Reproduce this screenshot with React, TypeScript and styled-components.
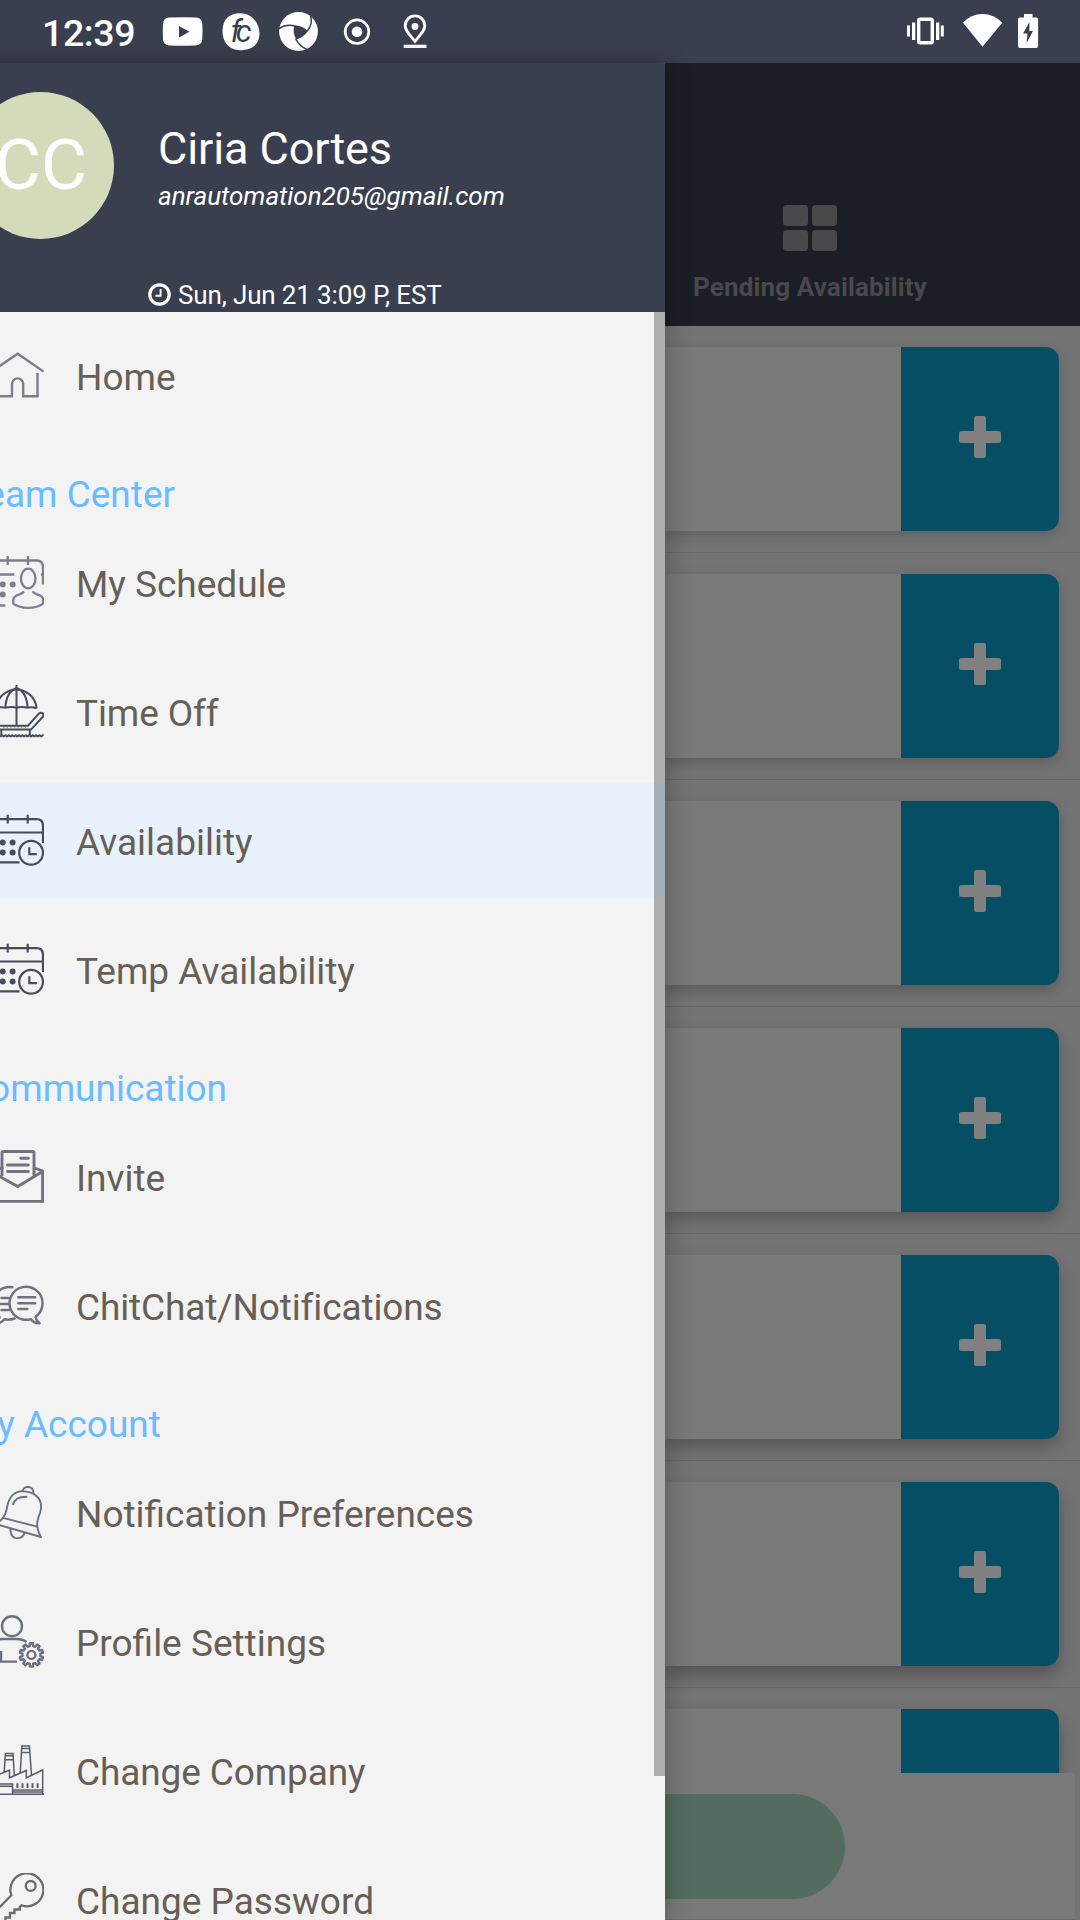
import React from "react";
import styled, { createGlobalStyle } from "styled-components";

const GlobalStyle = createGlobalStyle`
  * { box-sizing: border-box; }
  html, body { margin: 0; padding: 0; }
  body { width: 1080px; height: 1920px; overflow: hidden; background: #3a3f4f; font-family: Roboto, "Noto Sans", sans-serif; }
`;

const Screen = styled.div`
  width: 1080px;
  height: 1920px;
  overflow: hidden;
  display: flex;
  flex-direction: column;
`;

const StatusBar = styled.header`
  height: 63px;
  flex: none;
  display: flex;
  align-items: center;
  justify-content: space-between;
  background: #3a3f4f;
  color: #fff;
  padding: 0 40px 0 42px;
`;

const StatusGroup = styled.div<{ $gap: number }>`
  display: flex;
  align-items: center;
  gap: ${(p) => p.$gap}px;
`;

const Clock = styled.span`
  width: 102px;
  font-size: 37.5px;
  line-height: 44px;
  font-weight: 500;
  letter-spacing: -0.4px;
  padding-top: 2px;
  white-space: nowrap;
`;

const Body = styled.div`
  flex: 1;
  min-height: 0;
  display: flex;
`;

const Drawer = styled.aside`
  position: relative;
  z-index: 2;
  flex: none;
  width: 720px;
  margin-left: -55px;
  display: flex;
  flex-direction: column;
  background: #f3f3f3;
  box-shadow: 0 0 24px rgba(0, 0, 0, 0.3);
`;

const Profile = styled.div`
  height: 249px;
  flex: none;
  display: flex;
  flex-direction: column;
  background: #3a3f4f;
  color: #fff;
`;

const ProfileTop = styled.div`
  display: flex;
  height: 217px;
  padding: 29px 0 0 22px;
`;

const Avatar = styled.div`
  width: 147px;
  height: 147px;
  border-radius: 50%;
  flex: none;
  display: flex;
  align-items: center;
  justify-content: center;
  padding: 0 0 2px 1px;
  background: #d4dbba;
  font-size: 71px;
  line-height: 80px;
`;

const Person = styled.div`
  padding: 30px 0 0 44px;
`;

const PersonName = styled.div`
  font-size: 45px;
  line-height: 54px;
  letter-spacing: -0.1px;
  white-space: nowrap;
`;

const Email = styled.div`
  font-size: 26px;
  line-height: 36px;
  margin-top: 2px;
  font-style: italic;
  letter-spacing: -0.05px;
`;

const TimeRow = styled.div`
  display: flex;
  align-items: center;
  gap: 7px;
  padding-left: 203px;
  height: 30px;
  font-size: 26px;
  line-height: 30px;
  letter-spacing: -0.15px;
  white-space: nowrap;
`;

const MenuScroll = styled.nav`
  position: relative;
  flex: 1;
  min-height: 0;
  overflow: hidden;
  padding-top: 6px;
`;

const ScrollThumb = styled.div`
  position: absolute;
  top: 0;
  right: 0;
  width: 11px;
  height: 1464px;
  background: rgba(0, 0, 0, 0.28);
`;

const Item = styled.div<{ $active?: boolean }>`
  height: 116px;
  margin-bottom: 13px;
  padding-left: 46px;
  display: flex;
  align-items: center;
  gap: 32px;
  background: ${(p) => (p.$active ? "#e7f2fd" : "transparent")};
`;

const ItemLabel = styled.span<{ $tight: boolean }>`
  font-size: 37px;
  line-height: 44px;
  padding-top: 4px;
  color: #675f56;
  letter-spacing: ${(p) => (p.$tight ? "-0.12px" : "0")};
  white-space: nowrap;
`;

const ItemIcon = styled.svg<{ $color: string; $stroke: number }>`
  width: 53px;
  height: 53px;
  flex: none;
  margin-bottom: 2px;
  fill: none;
  stroke: ${(p) => p.$color};
  color: ${(p) => p.$color};
  stroke-width: ${(p) => p.$stroke};
`;

const SectionTitle = styled.h2`
  margin: 0;
  height: 78px;
  padding: 26px 0 0 20px;
  font-size: 37px;
  line-height: 44px;
  font-weight: 400;
  color: #6abbff;
  white-space: nowrap;
`;

const Content = styled.main`
  flex: 1;
  min-width: 0;
  display: flex;
  flex-direction: column;
  background: #737373;
`;

const TabBar = styled.div`
  height: 263px;
  flex: none;
  display: flex;
  flex-direction: column;
  align-items: center;
  padding: 142px 125px 0 0;
  background: #1c1e26;
  color: #49494c;
`;

const TabGrid = styled.div`
  display: grid;
  grid-template-columns: 25px 25px;
  grid-template-rows: 21px 21px;
  gap: 4px;
`;

const Tile = styled.i`
  border-radius: 4px;
  background: #49494c;
`;

const TabLabel = styled.div`
  margin-top: 21px;
  font-size: 26px;
  line-height: 30px;
  font-weight: 700;
  letter-spacing: 0.13px;
  white-space: nowrap;
`;

const List = styled.div`
  height: 1447px;
  flex: none;
  overflow: hidden;
`;

const Row = styled.div`
  height: 227px;
  padding: 21px 21px 21px 0;
  border-bottom: 1px solid #676767;
`;

const Card = styled.div<{ $depth: number }>`
  height: 184px;
  display: flex;
  justify-content: flex-end;
  overflow: hidden;
  background: #797979;
  border-radius: 0 13px 13px 0;
  box-shadow: 0 ${(p) => 4 + p.$depth}px ${(p) => 12 + p.$depth}px rgba(0, 0, 0, ${(p) => 0.17 + p.$depth * 0.02});
`;

const AddButton = styled.div`
  width: 158px;
  padding: 0 1px 4px 0;
  display: flex;
  align-items: center;
  justify-content: center;
  background: #064e64;
`;

const Footer = styled.div`
  flex: 1;
  margin-right: 5px;
  padding-top: 21px;
  background: #797979;
  border-bottom: 1px solid #6c6c6c;
`;

const Submit = styled.div`
  width: 180px;
  height: 105px;
  border-radius: 0 53px 53px 0;
  background: #536c5f;
`;

const gearPath = (cx: number, cy: number, outer: number, inner: number, teeth: number) => {
  const step = (Math.PI * 2) / teeth;
  const points: string[] = [];
  for (let i = 0; i < teeth; i++) {
    const a = i * step - Math.PI / 2;
    [
      [-0.3, inner],
      [-0.2, outer],
      [0.2, outer],
      [0.3, inner],
    ].forEach(([o, r]) => {
      points.push(`${(cx + r * Math.cos(a + o * step)).toFixed(2)} ${(cy + r * Math.sin(a + o * step)).toFixed(2)}`);
    });
  }
  return `M${points.join("L")}Z`;
};

const CalendarClock = (
  <>
    <path d="M-9 5.2H36.5Q43 5.2 43 12V29M-9 18.5H43M-9 48.4H19.5M7.7 .8V9.5M27.7 .8V9.5" />
    <circle cx="31.1" cy="38.8" r="11.9" />
    <path d="M29.3 33.2V40.2H36.8" />
    <g fill="currentColor" stroke="none">
      <circle cx="2.7" cy="28.5" r="3" />
      <circle cx="12.6" cy="28.5" r="3" />
      <circle cx="2.7" cy="38.4" r="3" />
      <circle cx="12.6" cy="38.4" r="3" />
    </g>
  </>
);

type Icon = { color: string; stroke: number; art: React.ReactNode };

const icons: Record<string, Icon> = {
  home: {
    color: "#7b7f8b",
    stroke: 2.4,
    art: (
      <path d="M-8.5 22.6L17.7 4.8L43.6 22.6M37.5 24V47.2H23.2V35a5.6 5.6 0 0 0-11.2 0V47.2H-1.5V24" />
    ),
  },
  schedule: {
    color: "#7b7f8b",
    stroke: 2.3,
    art: (
      <>
        <path d="M-9 4.5H36Q43 4.5 43 11V28.5M7.7 0V9M28 0V9M-9 18.5H14.3M-9 49.5H5.3M41 18.5h2" />
        <ellipse cx="28.2" cy="22.5" rx="7.3" ry="9.8" />
        <path d="M24 35.3Q23 37 19.5 38.3Q13.3 40 13.3 44V47.6Q19 51.8 28.2 51.8Q37.5 51.8 43 47.6V43.5Q43 40 37.5 38.6Q34 37.3 32.6 35.3" />
        <g fill="currentColor" stroke="none">
          <circle cx="2.7" cy="28.5" r="3" />
          <circle cx="12.7" cy="28.5" r="3" />
          <circle cx="2.7" cy="38.6" r="3" />
        </g>
      </>
    ),
  },
  timeOff: {
    color: "#464c5e",
    stroke: 2,
    art: (
      <>
        <path d="M16.5 0V40.5M-3.8 23.3A20.3 21 0 0 1 36.6 23.3M16.5 3Q6 7 5.3 23.3M16.5 3Q27 7 27.6 23.3" />
        <path d="M-3.8 23.2Q1 21.5 5.3 22.6Q11 21.6 16.5 22.4Q22 21.6 27.6 22.6Q32 21.5 36.6 23.2" />
        <path d="M-9 40.7H28L38.8 28.7Q41 27 43 28.6Q44 30.5 42.6 32L31 44.6H-9M1.3 44V50M29.8 44V50" />
        <path d="M-9 50.8q.85-1 1.7 0t1.7 0t1.7 0t1.7 0t1.7 0t1.7 0t1.7 0t1.7 0t1.7 0t1.7 0t1.7 0t1.7 0t1.7 0t1.7 0t1.7 0t1.7 0t1.7 0t1.7 0t1.7 0t1.7 0t1.7 0t1.7 0t1.7 0t1.7 0t1.7 0t1.7 0t1.7 0t1.7 0t1.7 0t1.7 0t1.7 0" />
        <path d="M3 42H28" strokeDasharray="1.4 2.2" strokeWidth="1.2" />
      </>
    ),
  },
  availability: { color: "#464c5e", stroke: 2.2, art: CalendarClock },
  invite: {
    color: "#70737f",
    stroke: 2.9,
    art: (
      <>
        <path d="M2 26V3Q2 1.5 3.7 1.5H32.3Q34 1.5 34 3V26M-9 21.5L17.7 36.6L42.6 21.6M34.5 18L42.6 21V51.4H-9" />
        <path d="M20.7 8.2H28.3M7.5 15H28.3M7.5 21.5H28.3M-9 21L2 18" strokeLinecap="round" />
      </>
    ),
  },
  chat: {
    color: "#70737f",
    stroke: 2.5,
    art: (
      <g strokeLinecap="round" strokeLinejoin="round">
        <path d="M35.8 37.6Q35.5 40.5 39.5 44.2Q34.5 44.6 31 40.2Q27 41.3 22.5 40.4A16.5 16.5 0 1 1 35.8 37.6Z" />
        <path d="M18.3 18.2H35.2M18.3 24.2H35.2M18.3 30H27.2" />
        <path d="M12.3 8.3A16.5 16.5 0 0 0 -.5 37.8Q-1 41-4 44.2Q1 44.6 4.5 40.3Q9.5 41.3 14.5 39.5M1.5 19H8.8M.5 25H7.8M1.5 31H8.8" />
      </g>
    ),
  },
  bell: {
    color: "#6b7080",
    stroke: 1.9,
    art: (
      <g strokeLinejoin="round">
        <path d="M3 31.8Q6 28 7.3 20Q10.5 5.2 23 5.1Q33 6 37.5 11Q41.5 15 41 22.5Q40.5 27 38.5 31Q36.5 37 37.4 41.5Q38.3 47 41 51L-6 37.5Q1 35.5 3 31.8L37.2 40.6" />
        <path d="M22.2 5.2Q24 .9 28 .9Q33.6 1.3 33.6 8M13 19Q14.5 10.5 27.3 10.8M10.4 43Q10.6 50.5 15 51.8Q22 53.5 24.6 46.8" />
      </g>
    ),
  },
  profile: {
    color: "#697080",
    stroke: 2.4,
    art: (
      <>
        <circle cx="12" cy="11.2" r="10" />
        <path d="M-9 34Q-7 24 3 24H16Q22.5 24 26.5 27M1 36V46.6H17" />
        <path d={gearPath(31.4, 39.9, 11.8, 9, 10)} strokeLinejoin="round" />
        <circle cx="31.4" cy="39.9" r="4" />
      </>
    ),
  },
  factory: {
    color: "#575d6d",
    stroke: 1.5,
    art: (
      <>
        <path d="M-9 33.5L9.5 26.2V33.8L26.3 26.5V33.8L42.7 26V50" />
        <path d="M4.2 28L5.4 9.4H13L14.3 31.5M20.2 29L21.8 2H29.4L31.5 31M5.2 11.7H13.2M5 15.8H13.4M21.6 4.6H29.6M21.4 8.6H29.8" />
        <path d="M-9 50.3H44M-9 40H12.6V50M-9 42.3H12.6M12.6 45.9H42.7M12.6 47.9H42.7" />
        <path d="M17.4 39.3V44M22.5 39.3V44M27.5 39.3V44M32.5 39.3V44M37.6 39.3V44" strokeWidth="2" />
      </>
    ),
  },
  key: {
    color: "#6b6b6b",
    stroke: 2.3,
    art: (
      <>
        <path d="M-9 43L11.3 22.2A16.5 16.5 0 1 1 21.5 32.4L19.8 34V36.5H14.5V40H10V44.5H5.5V47.5L0 52" />
        <circle cx="30.7" cy="12.9" r="4.9" />
      </>
    ),
  },
};

type Entry = { section: string } | { icon: string; label: string; active?: boolean; tight?: boolean };

const menu: Entry[] = [
  { icon: "home", label: "Home" },
  { section: "Team Center" },
  { icon: "schedule", label: "My Schedule" },
  { icon: "timeOff", label: "Time Off", tight: true },
  { icon: "availability", label: "Availability", active: true },
  { icon: "availability", label: "Temp Availability" },
  { section: "Communication" },
  { icon: "invite", label: "Invite" },
  { icon: "chat", label: "ChitChat/Notifications", tight: true },
  { section: "My Account" },
  { icon: "bell", label: "Notification Preferences" },
  { icon: "profile", label: "Profile Settings" },
  { icon: "factory", label: "Change Company", tight: true },
  { icon: "key", label: "Change Password" },
];

const StatusIcons = () => (
  <svg width="266" height="40" viewBox="162 12 266 40" fill="#fff">
    <path d="M169 17.600Q182.500 16.800 196 17.600Q202 18 202.300 24Q202.800 31 202.300 39Q202 45 196 45.400Q182.500 46.200 169 45.400Q163.300 45 163 39Q162.600 31 163 24Q163.300 18 169 17.600Z" />
    <path d="M179 26V37.500L189.500 31.700Z" fill="#3a3f4f" />
    <path d="M240 13.300C251 13.300 259.500 22 259.500 34C259.500 45 251 50.200 240 50.200C229 50.200 222.500 42 222.500 31C222.500 19 230 13.300 240 13.300Z" />
    <text x="230.500" y="42" fontFamily="Roboto" fontSize="31" fontStyle="italic" fontWeight="400" fill="#3a3f4f" textLength="21">fc</text>
    <circle cx="298.500" cy="31.500" r="19.400" />
    <path d="M294.500 25.300Q302 25.500 308 31Q304.500 36.500 296.500 39.600Q292 33 294.500 25.300Z" fill="#3a3f4f" />
    <g fill="none" stroke="#3a3f4f" strokeWidth="1.500">
      <path d="M279 28.600Q286 23.800 295 25.900" />
      <path d="M310.500 15.500Q313 24 307.300 31" />
      <path d="M295.500 38.500Q299 46 307.500 49.800" />
    </g>
    <circle cx="357" cy="31.700" r="11.800" fill="none" stroke="#fff" strokeWidth="2.700" />
    <circle cx="357" cy="31.700" r="5.300" />
    <path d="M415 41.300C409 34 405.200 30.500 405.200 25.700A9.800 9.800 0 0 1 424.800 25.700C424.800 30.500 421 34 415 41.300Z" fill="none" stroke="#fff" strokeWidth="2.800" />
    <circle cx="415" cy="26.500" r="3.400" />
    <path d="M403.700 44.700H426.500V48H403.700Z" />
  </svg>
);

const SystemIcons = () => (
  <svg width="134" height="40" viewBox="906 12 134 40" fill="#fff">
    <rect x="918.700" y="19.200" width="13.600" height="23.600" rx="1.500" fill="none" stroke="#fff" strokeWidth="3.400" />
    <path d="M907 25.500h3v11h-3zM912 22.500h3.300v17.500H912zM936 22.500h3.300v17.500H936zM940.800 25.500h3v11h-3z" />
    <path d="M963 22.700Q971 14 982.500 14T1002.200 22.700L982.500 46.700Z" />
    <path d="M1024 14h8.500v3.400h3.600q2 0 2 2V46q0 2-2 2H1020q-2 0-2-2V19.400q0-2 2-2h4z" />
    <path d="M1029.500 22L1023 33.500H1027.500L1026.500 43L1033 31H1029.300Z" fill="#3a3f4f" />
  </svg>
);

const ClockIcon = () => (
  <svg width="23" height="24" viewBox="0 0 23 24" fill="none" stroke="#fff">
    <circle cx="11.500" cy="11.500" r="9.700" strokeWidth="3.200" />
    <path d="M12.600 6V12.800H7.500" strokeWidth="1.900" />
  </svg>
);

const PlusIcon = () => (
  <svg width="42" height="42" viewBox="0 0 42 42" fill="#808080">
    <rect x="15" y="0" width="12" height="42" rx="2.500" />
    <rect x="0" y="15" width="42" height="12" rx="2.500" />
  </svg>
);

export default function App() {
  return (
    <>
      <GlobalStyle />
      <Screen>
        <StatusBar>
          <StatusGroup $gap={18}>
            <Clock>12:39</Clock>
            <StatusIcons />
          </StatusGroup>
          <SystemIcons />
        </StatusBar>
        <Body>
          <Drawer>
            <Profile>
              <ProfileTop>
                <Avatar>CC</Avatar>
                <Person>
                  <PersonName>Ciria Cortes</PersonName>
                  <Email>anrautomation205@gmail.com</Email>
                </Person>
              </ProfileTop>
              <TimeRow>
                <ClockIcon />
                Sun, Jun 21 3:09 P, EST
              </TimeRow>
            </Profile>
            <MenuScroll>
              {menu.map((entry) => {
                if ("section" in entry) {
                  return <SectionTitle key={entry.section}>{entry.section}</SectionTitle>;
                }
                const icon = icons[entry.icon];
                return (
                  <Item key={entry.label} $active={entry.active}>
                    <ItemIcon viewBox="-9 0 53 53" $color={icon.color} $stroke={icon.stroke}>
                      {icon.art}
                    </ItemIcon>
                    <ItemLabel $tight={Boolean(entry.tight)}>{entry.label}</ItemLabel>
                  </Item>
                );
              })}
              <ScrollThumb />
            </MenuScroll>
          </Drawer>
          <Content>
            <TabBar>
              <TabGrid>
                <Tile />
                <Tile />
                <Tile />
                <Tile />
              </TabGrid>
              <TabLabel>Pending Availability</TabLabel>
            </TabBar>
            <List>
              {[0, 1, 2, 3, 4, 5, 6].map((n) => (
                <Row key={n}>
                  <Card $depth={n}>
                    <AddButton>
                      <PlusIcon />
                    </AddButton>
                  </Card>
                </Row>
              ))}
            </List>
            <Footer>
              <Submit />
            </Footer>
          </Content>
        </Body>
      </Screen>
    </>
  );
}
